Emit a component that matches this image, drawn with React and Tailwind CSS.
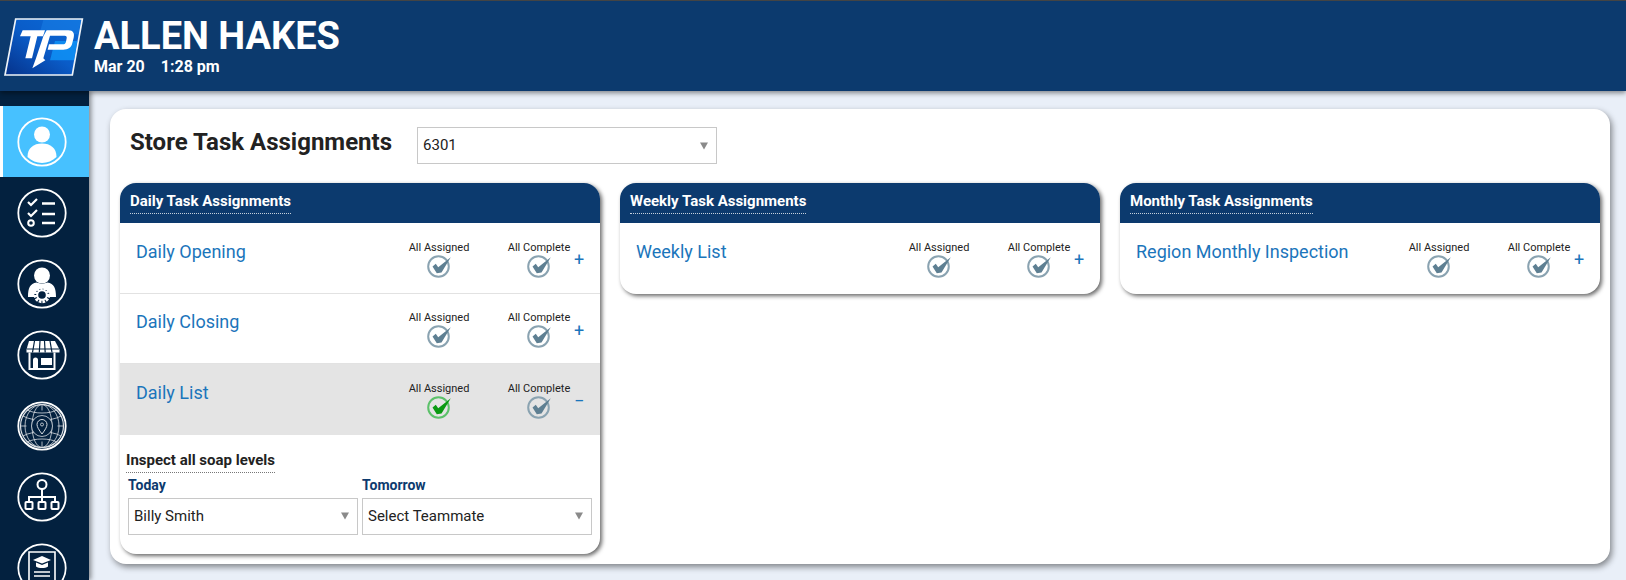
import React from "react";

const FONT = "font-['Roboto','Liberation_Sans',sans-serif]";

function Ring({ children }) {
  return (
    <svg width="50" height="50" viewBox="0 0 50 50" fill="none" stroke="white">
      <circle cx="25" cy="25" r="23.700" strokeWidth="1.800" />
      {children}
    </svg>
  );
}

function UserIcon() {
  return (
    <Ring>
      <circle cx="25" cy="17.500" r="8" fill="white" stroke="none" />
      <path d="M10.500 40c0-9 6-13.500 14.500-13.500S39.500 31 39.500 40c-4 3.800-9 6-14.500 6s-10.500-2.200-14.500-6z" fill="white" stroke="none" />
    </Ring>
  );
}

function ChecklistIcon() {
  return (
    <Ring>
      <path d="M11 14l3 3 6-6M11 25l3 3 6-6" strokeWidth="2.200" />
      <circle cx="14" cy="35" r="2.800" strokeWidth="2" />
      <path d="M25 15.500h13M25 26h13M25 35h13" strokeWidth="2.400" />
    </Ring>
  );
}

function UserGearIcon() {
  return (
    <Ring>
      <circle cx="25" cy="16.500" r="8" fill="white" stroke="none" />
      <path d="M11 38c0-9 2-13.500 8.500-14.500 3.500 1.500 7.500 1.500 11 0C37 24.500 39 29 39 38H33a8 8 0 0 0-16 0z" fill="white" stroke="none" />
      <circle cx="25" cy="36" r="6.500" fill="#03213f" stroke="white" strokeWidth="3.500" strokeDasharray="2.500 1" />
      <circle cx="25" cy="36" r="4.800" stroke="white" strokeWidth="2" />
    </Ring>
  );
}

function StoreIcon() {
  return (
    <Ring>
      <path d="M12 11h26l4.500 8.500v3h-33v-3z" fill="white" stroke="none" />
      <path d="M17.500 11l-2 11.500M23 11l-.700 11.500M27.500 11l.700 11.500M33 11l2 11.500M9.500 19h33" stroke="#03213f" strokeWidth="1.200" />
      <path d="M12.500 22.500V39h25V22.500" strokeWidth="2" />
      <path d="M16 39v-9a2.500 2.500 0 0 1 5 0v9" fill="white" stroke="none" />
      <rect x="24" y="28" width="11" height="7" fill="white" stroke="none" />
    </Ring>
  );
}

function GlobeIcon() {
  return (
    <Ring>
      <g strokeWidth="0.800" opacity="0.85">
        <circle cx="25" cy="25" r="21.500" strokeWidth="1.200" />
        <ellipse cx="25" cy="25" rx="10" ry="21.500" />
        <ellipse cx="25" cy="25" rx="17" ry="21.500" />
        <path d="M25 3.500v6M25 40.500v6M3.500 25h6M40.500 25h6M6 15c5 3 12 4 19 4s14-1 19-4M6 35c5-3 12-4 19-4s14 1 19 4M10 9c4 2 9 3 15 3s11-1 15-3M10 41c4-2 9-3 15-3s11 1 15 3" />
        <circle cx="25" cy="25" r="10.500" fill="#03213f" />
        <path d="M25 33c-3-4-5-7-5-9.500a5 5 0 0 1 10 0c0 2.500-2 5.500-5 9.500z" strokeWidth="1" />
        <circle cx="25" cy="23.500" r="1.500" />
      </g>
    </Ring>
  );
}

function OrgIcon() {
  return (
    <Ring>
      <circle cx="25" cy="12.500" r="4.500" strokeWidth="2" />
      <path d="M25 17v13M12 30v-5h26v5" strokeWidth="2" />
      <rect x="8.500" y="30" width="7" height="7" rx="0.800" strokeWidth="2" />
      <rect x="21.500" y="30" width="7" height="7" rx="0.800" strokeWidth="2" />
      <rect x="34.500" y="30" width="7" height="7" rx="0.800" strokeWidth="2" />
    </Ring>
  );
}

function DocIcon() {
  return (
    <Ring>
      <path d="M12 9h26v36H12z" strokeWidth="1.600" />
      <path d="M25 13l9 4-9 3.500-9-3.500z" fill="white" stroke="none" />
      <path d="M19 19.500v4c3 2 9 2 12 0v-4l-6 2.500z" fill="white" stroke="none" />
      <path d="M17 29h16M17 33h16M27 38h6" strokeWidth="1.400" />
    </Ring>
  );
}

function Logo() {
  return (
    <svg width="80" height="60" viewBox="12 48 240 180" className="shrink-0 mt-[1px]">
      <defs>
        <linearGradient id="tile" x1="0" y1="1" x2="1" y2="0">
          <stop offset="0" stopColor="#06328a" />
          <stop offset="0.5" stopColor="#0a5cc8" />
          <stop offset="1" stopColor="#0a6ad8" />
        </linearGradient>
      </defs>
      <path d="M47 54H247L217 222H15z" fill="url(#tile)" stroke="#eef3f8" strokeWidth="5" />
      <path d="M130 57H243L235 100H118z" fill="#1a7fe6" opacity="0.55" />
      <path d="M165 120H232L222 178H150z" fill="#0f9cff" opacity="0.7" />
      <path d="M68 88H135L129 106H112L96 172H76L92 106H60z" fill="white" />
      <path d="M140 88H205C220 88 224 98 221 110L217 126C214 140 204 146 190 146H143L147 130H188C194 130 197 127 198 122L200 112C201 107 199 104 194 104H150L130 172 136 178 97 202 108 172 130 106z" fill="white" />
    </svg>
  );
}

function Check({ on }) {
  const ring = on ? "#5cc16a" : "#8aa3b1";
  const tick = on ? "#0a9a12" : "#5e7f92";
  return (
    <svg width="25" height="24" viewBox="0 0 25 24" fill="none">
      <circle cx="11.500" cy="12.500" r="10.300" stroke={ring} strokeWidth="2" />
      <path d="M5.500 12.500L8.800 9.800 11.200 13.200 23.800 3.200 14.500 18.500 9.800 19.200z" fill={tick} />
    </svg>
  );
}

function Status({ label, on }) {
  return (
    <div className="w-[70px] flex flex-col items-center">
      <span className="text-[11px] leading-[14px] text-[#222] whitespace-nowrap">{label}</span>
      <span className="mt-[-1px] flex"><Check on={on} /></span>
    </div>
  );
}

function TaskRow({ name, open, last }) {
  return (
    <div className={`h-[70.670px] flex ${open ? "bg-[#e4e4e4]" : ""} ${last ? "" : "border-b border-[#e2e2e2]"}`}>
      <div className="flex-1 pl-4 pt-[16.500px] text-[18px] leading-6 text-[#1b75bb]">{name}</div>
      <div className="pt-[17.500px] flex gap-[30px]">
        <Status label="All Assigned" on={open} />
        <Status label="All Complete" />
      </div>
      <div className="w-[26px] pt-[25px] text-[18px] leading-6 text-[#1b75bb]">{open ? "−" : "+"}</div>
    </div>
  );
}

function Picker({ value, className }) {
  return (
    <div className={`relative ${className}`}>
      <select defaultValue={value} className="w-full h-full appearance-none bg-white border border-[#c8c8c8] pl-[5px] text-[15px] text-[#222] outline-none">
        <option>{value}</option>
      </select>
      <span className="absolute right-[9px] top-1/2 -translate-y-1/2 w-0 h-0 border-x-[4px] border-x-transparent border-t-[7px] border-t-[#8a8a8a] pointer-events-none" />
    </div>
  );
}

function TaskCard({ title, children }) {
  return (
    <div className="w-[480px] rounded-[16px] bg-white shadow-[2px_2px_4px_rgba(0,0,0,0.6)]">
      <div className="h-[40px] rounded-t-[16px] bg-[#0c3a6e] pl-[10px] pt-[6px]">
        <span className="inline-block h-[24px] text-[15px] leading-[22px] font-bold text-white border-b border-dotted border-[#c5d0dc]">{title}</span>
      </div>
      {children}
    </div>
  );
}

export default function App() {
  return (
    <div className={`h-[580px] overflow-hidden flex flex-col bg-[#e9eff8] ${FONT}`}>
      {/* top bar */}
      <header className="h-[91px] shrink-0 relative z-10 flex items-start bg-[#0c3a6e] border-t border-[#444] shadow-[0_2px_5px_rgba(0,0,0,0.45)] pt-[15px] pl-[4px]">
        <Logo />
        <div className="ml-[10px] text-white">
          <div className="text-[38px] leading-[40px] font-bold">ALLEN HAKES</div>
          <div className="text-[16px] leading-5 font-bold flex gap-4 mt-[1px]">
            <span>Mar 20</span>
            <span>1:28 pm</span>
          </div>
        </div>
      </header>

      <div className="flex-1 flex min-h-0">
        {/* side nav */}
        <nav className="w-[89px] shrink-0 pt-[15px] bg-[#03213f] shadow-[2px_0_5px_rgba(0,0,0,0.45)]">
          <div className="h-[71px] border-l-[3px] border-white pr-[8px] flex items-center justify-center bg-[#47c1ff]"><UserIcon /></div>
          {[ChecklistIcon, UserGearIcon, StoreIcon, GlobeIcon, OrgIcon, DocIcon].map((Icon, i) => (
            <div key={i} className="h-[71px] pr-[5px] flex items-center justify-center"><Icon /></div>
          ))}
        </nav>

        {/* main */}
        <main className="flex-1 pl-[21px] pt-[18px]">
          <div className="w-[1500px] h-[455px] rounded-[16px] bg-white shadow-[2px_3px_6px_rgba(0,0,0,0.45)] px-[10px]">
            <div className="h-[74px] flex items-start pl-[10px] pt-[17px]">
              <h1 className="text-[24px] leading-8 font-bold text-[#222]">Store Task Assignments</h1>
              <Picker value="6301" className="ml-[25px] mt-[1px] w-[300px] h-[37px]" />
            </div>
            <div className="flex items-start gap-5">
              <TaskCard title="Daily Task Assignments">
                <TaskRow name="Daily Opening" />
                <TaskRow name="Daily Closing" />
                <TaskRow name="Daily List" open last />
                <div className="h-[119px] pl-[6px] pt-[13px]">
                  <div className="inline-block text-[15px] leading-5 font-bold text-[#222] border-b border-dotted border-[#777] pb-[2px]">Inspect all soap levels</div>
                  <div className="flex gap-1 pl-[2px]">
                    <div className="w-[230px]">
                      <div className="text-[14px] leading-[18px] font-bold text-[#0c3a6e] mt-[3px] mb-[4px]">Today</div>
                      <Picker value="Billy Smith" className="h-[37px]" />
                    </div>
                    <div className="w-[230px]">
                      <div className="text-[14px] leading-[18px] font-bold text-[#0c3a6e] mt-[3px] mb-[4px]">Tomorrow</div>
                      <Picker value="Select Teammate" className="h-[37px]" />
                    </div>
                  </div>
                </div>
              </TaskCard>
              <TaskCard title="Weekly Task Assignments">
                <TaskRow name="Weekly List" last />
              </TaskCard>
              <TaskCard title="Monthly Task Assignments">
                <TaskRow name="Region Monthly Inspection" last />
              </TaskCard>
            </div>
          </div>
        </main>
      </div>
    </div>
  );
}
